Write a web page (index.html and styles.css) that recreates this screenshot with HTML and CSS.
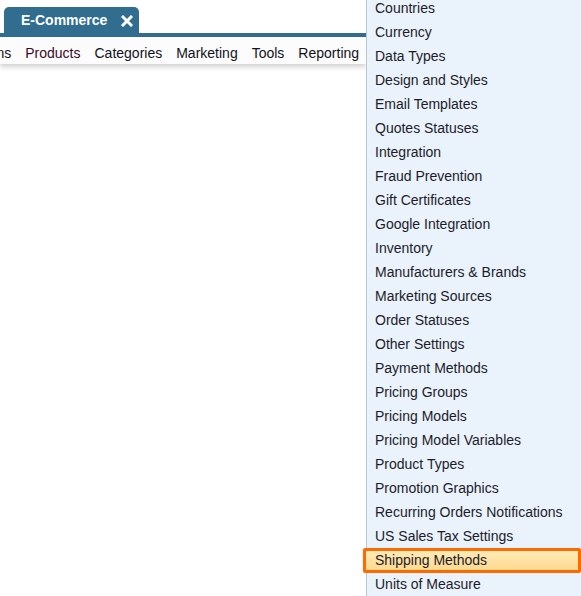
FILE: index.html
```html
<!DOCTYPE html>
<html>
<head>
<meta charset="utf-8">
<link rel="stylesheet" href="styles.css">
</head>
<body>
<div class="header">
  <div class="tabs">
    <div class="tab">
      <span class="tab-title">E-Commerce</span>
      <svg class="tab-close" width="12" height="12" viewBox="0 0 12 12"><path d="M2 2 L10 10 M10 2 L2 10" stroke="#fff" stroke-width="3" stroke-linecap="square"/></svg>
    </div>
  </div>
  <div class="tabbar"></div>
  <div class="nav">
    <span class="nav-item">Options</span>
    <span class="nav-item nav-visited">Products</span>
    <span class="nav-item">Categories</span>
    <span class="nav-item">Marketing</span>
    <span class="nav-item">Tools</span>
    <span class="nav-item">Reporting</span>
  </div>
</div>
<div class="dropdown">
  <div class="dd-item">Countries</div>
  <div class="dd-item">Currency</div>
  <div class="dd-item">Data Types</div>
  <div class="dd-item">Design and Styles</div>
  <div class="dd-item">Email Templates</div>
  <div class="dd-item">Quotes Statuses</div>
  <div class="dd-item">Integration</div>
  <div class="dd-item">Fraud Prevention</div>
  <div class="dd-item">Gift Certificates</div>
  <div class="dd-item">Google Integration</div>
  <div class="dd-item">Inventory</div>
  <div class="dd-item">Manufacturers &amp; Brands</div>
  <div class="dd-item">Marketing Sources</div>
  <div class="dd-item">Order Statuses</div>
  <div class="dd-item">Other Settings</div>
  <div class="dd-item">Payment Methods</div>
  <div class="dd-item">Pricing Groups</div>
  <div class="dd-item">Pricing Models</div>
  <div class="dd-item">Pricing Model Variables</div>
  <div class="dd-item">Product Types</div>
  <div class="dd-item">Promotion Graphics</div>
  <div class="dd-item">Recurring Orders Notifications</div>
  <div class="dd-item">US Sales Tax Settings</div>
  <div class="dd-item dd-active">Shipping Methods</div>
  <div class="dd-item">Units of Measure</div>
</div>
</body>
</html>
```
FILE: styles.css
```css
html, body {
  margin: 0;
  padding: 0;
  background: #ffffff;
  font-family: "Liberation Sans", Arial, sans-serif;
  font-size: 14px;
  overflow: hidden;
  height: 596px;
}

.header {
  width: 366px;
  padding-top: 7px;
}

.tabs {
  display: flex;
  padding-left: 4px;
}

.tab {
  width: 135px;
  height: 26px;
  box-sizing: border-box;
  background: #306d8f;
  border-radius: 5px 5px 0 0;
  display: flex;
  align-items: center;
  padding-left: 17px;
}

.tab-title {
  color: #ffffff;
  font-weight: bold;
  font-size: 14px;
}

.tab-close {
  margin-left: 14px;
  margin-top: 2px;
}

.tabbar {
  height: 4px;
  background: #306d8f;
}

.nav {
  height: 23px;
  padding-top: 4px;
  background: #fcfcfc;
  display: flex;
  align-items: center;
  gap: 14px;
  overflow: hidden;
  box-shadow: 0 3px 5px rgba(0, 0, 0, 0.18);
  white-space: nowrap;
}

.nav-item {
  color: #111122;
}

.nav-item:first-child {
  margin-left: -37px;
}

.nav-visited {
  color: #3a0a28;
}

.dropdown {
  position: absolute;
  left: 366px;
  top: -4px;
  right: 0;
  height: 604px;
  background: #eaf2fb;
  border-left: 1px solid #b4c7da;
  display: flex;
  flex-direction: column;
}

.dd-item {
  height: 24px;
  line-height: 24px;
  padding-left: 8px;
  color: #1c1c2a;
  white-space: nowrap;
}

.dd-active {
  box-sizing: border-box;
  margin-left: -4px;
  padding-left: 9px;
  line-height: 18px;
  height: 25px;
  margin-bottom: -1px;
  border: 3px solid #ff6a00;
  border-radius: 2px;
  background: linear-gradient(#ffebb8, #ffd98f);
}
```
